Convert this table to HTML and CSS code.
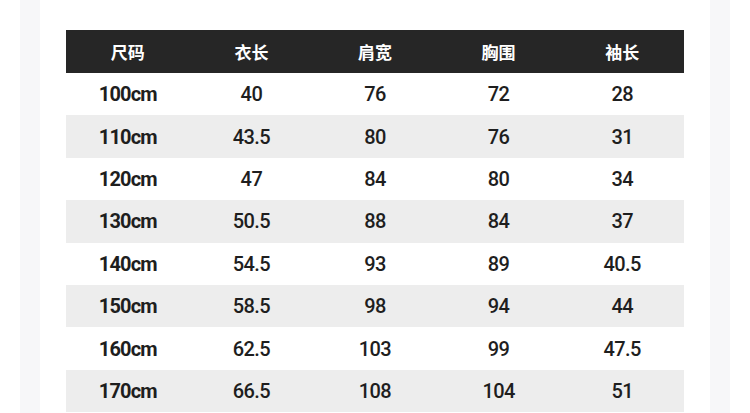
FILE: index.html
```html
<!DOCTYPE html>
<html lang="zh">
<head>
<meta charset="utf-8">
<title>尺码表</title>
<link rel="stylesheet" href="styles.css">
</head>
<body>
<div class="page">
  <div class="panel">
    <table class="size-table">
      <thead>
        <tr><th>尺码</th><th>衣长</th><th>肩宽</th><th>胸围</th><th>袖长</th></tr>
      </thead>
      <tbody>
        <tr><td class="size">100cm</td><td>40</td><td>76</td><td>72</td><td>28</td></tr>
        <tr><td class="size">110cm</td><td>43.5</td><td>80</td><td>76</td><td>31</td></tr>
        <tr><td class="size">120cm</td><td>47</td><td>84</td><td>80</td><td>34</td></tr>
        <tr><td class="size">130cm</td><td>50.5</td><td>88</td><td>84</td><td>37</td></tr>
        <tr><td class="size">140cm</td><td>54.5</td><td>93</td><td>89</td><td>40.5</td></tr>
        <tr><td class="size">150cm</td><td>58.5</td><td>98</td><td>94</td><td>44</td></tr>
        <tr><td class="size">160cm</td><td>62.5</td><td>103</td><td>99</td><td>47.5</td></tr>
        <tr><td class="size">170cm</td><td>66.5</td><td>108</td><td>104</td><td>51</td></tr>
      </tbody>
    </table>
  </div>
</div>
</body>
</html>
```
FILE: styles.css
```css
html, body {
  margin: 0;
  padding: 0;
  background: #ffffff;
  height: 100%;
  overflow: hidden;
}
body {
  padding: 0 20px;
  box-sizing: border-box;
  width: 750px;
}
.page {
  background: #f7f7f9;
  padding: 0 20px;
  height: 413px;
}
.panel {
  background: #ffffff;
  height: 100%;
  padding: 30px 26px 0;
  box-sizing: border-box;
}
.size-table {
  width: 618px;
  border-collapse: collapse;
  table-layout: fixed;
  font-family: Roboto, "Noto Sans CJK SC", sans-serif;
  color: #1e1e1e;
}
.size-table th {
  background: #262626;
  color: #ffffff;
  height: 43px;
  padding: 0;
  font-family: "Noto Sans CJK SC", sans-serif;
  font-weight: 700;
  font-size: 17px;
  text-align: center;
}
.size-table td {
  height: 42.4px;
  padding: 0;
  line-height: 20px;
  text-align: center;
  font-size: 20px;
  font-weight: 500;
  letter-spacing: -0.6px;
}
.size-table td.size {
  font-weight: 700;
  letter-spacing: -0.8px;
}
.size-table tbody tr:nth-child(even) td {
  background: #ededed;
}
```
